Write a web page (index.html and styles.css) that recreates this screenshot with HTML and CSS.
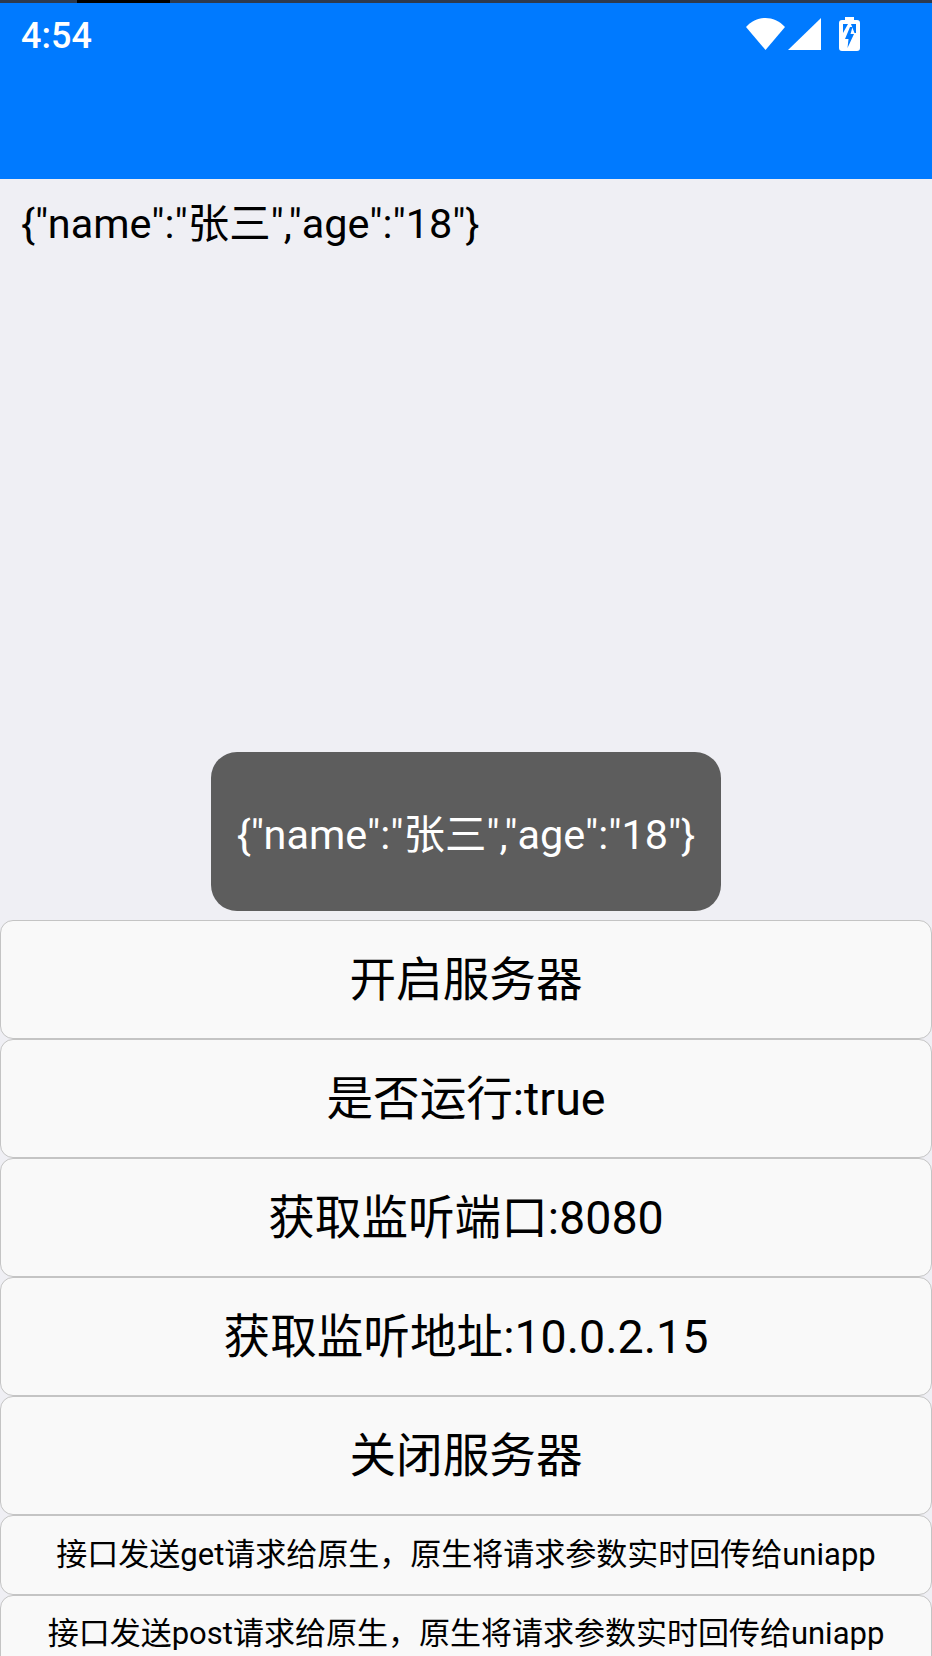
FILE: index.html
```html
<!DOCTYPE html>
<html>
<head>
	<meta charset="utf-8">
	<title>uniapp</title>
	<link rel="stylesheet" href="styles.css">
</head>
<body>
	<div class="top_edge"><div class="notch"></div></div>
	<div class="header">
		<div class="time">4:54</div>
		<div class="status_icons">
			<svg class="wifi" width="39" height="32" viewBox="0 0 39 32"><path d="M0 9 C11 -3 28 -3 39 9 L19.500 32 Z" fill="#fff"/></svg>
			<svg class="signal" width="33" height="32" viewBox="0 0 33 32"><path d="M33 0 V32 H0 Z" fill="#fff"/></svg>
			<svg class="battery" width="21" height="34" viewBox="0 0 21 34"><path fill-rule="evenodd" fill="#fff" d="M6 0 H15 V3 H18 Q21 3 21 6 V31 Q21 34 18 34 H3 Q0 34 0 31 V6 Q0 3 3 3 H6 Z M4 7 H9 L4 16 Z M12 7 H17 V16 H15.500 Z M11 10 L6 22 H9.500 L8.500 31 L15 17 H11.500 L13.500 10 Z"/></svg>
		</div>
	</div>

	<div class="content">
		<div class="result">{"name":"张三","age":"18"}</div>
		<div class="toast">{"name":"张三","age":"18"}</div>
	</div>

	<div class="buttons">
		<button class="btn">开启服务器</button>
		<button class="btn">是否运行:true</button>
		<button class="btn">获取监听端口:8080</button>
		<button class="btn">获取监听地址:10.0.2.15</button>
		<button class="btn">关闭服务器</button>
		<button class="btn btn_small">接口发送get请求给原生，原生将请求参数实时回传给uniapp</button>
		<button class="btn btn_small">接口发送post请求给原生，原生将请求参数实时回传给uniapp</button>
	</div>
</body>
</html>
```

FILE: styles.css
```css
html, body {
	margin: 0;
	height: 1656px;
	overflow: hidden;
}

body {
	background: #efeff4;
	font-family: Roboto, "Noto Sans CJK SC", sans-serif;
	color: #000;
}

.top_edge {
	height: 3px;
	background: #2d3a4e;
	padding-left: 77px;
}

.notch {
	width: 93px;
	height: 3px;
	background: #000;
}

.header {
	height: 176px;
	background: #007aff;
	display: flex;
	justify-content: space-between;
	align-items: flex-start;
	padding: 12px 72px 0 21px;
	box-sizing: border-box;
}

.time {
	color: #fff;
	font-size: 36px;
	font-weight: 500;
	line-height: 43px;
}

.status_icons {
	display: flex;
	align-items: flex-start;
	padding-top: 3px;
}

.signal {
	margin-left: 3px;
}

.battery {
	margin-left: 18px;
	margin-top: -1px;
}

.content {
	height: 741px;
	position: relative;
}

.result {
	padding: 21px 21px 0;
	font-size: 41.4px;
	line-height: 48px;
}

.toast {
	position: absolute;
	left: 211px;
	top: 573px;
	width: 510px;
	height: 159px;
	padding-bottom: 2px;
	box-sizing: border-box;
	border-radius: 26px;
	background: #5d5d5d;
	color: #fff;
	font-size: 41.4px;
	display: flex;
	align-items: center;
	justify-content: center;
}

.buttons {
	display: flex;
	flex-direction: column;
}

.btn {
	display: block;
	width: 100%;
	height: 119.1px;
	flex: none;
	padding: 0 0 8px;
	margin: 0;
	background: #f9f9f9;
	border: 1px solid #c4c4c4;
	border-radius: 13px;
	font-family: inherit;
	font-size: 46.6px;
	color: #000;
}

.btn_small {
	height: 79.3px;
	font-size: 31px;
}
```
